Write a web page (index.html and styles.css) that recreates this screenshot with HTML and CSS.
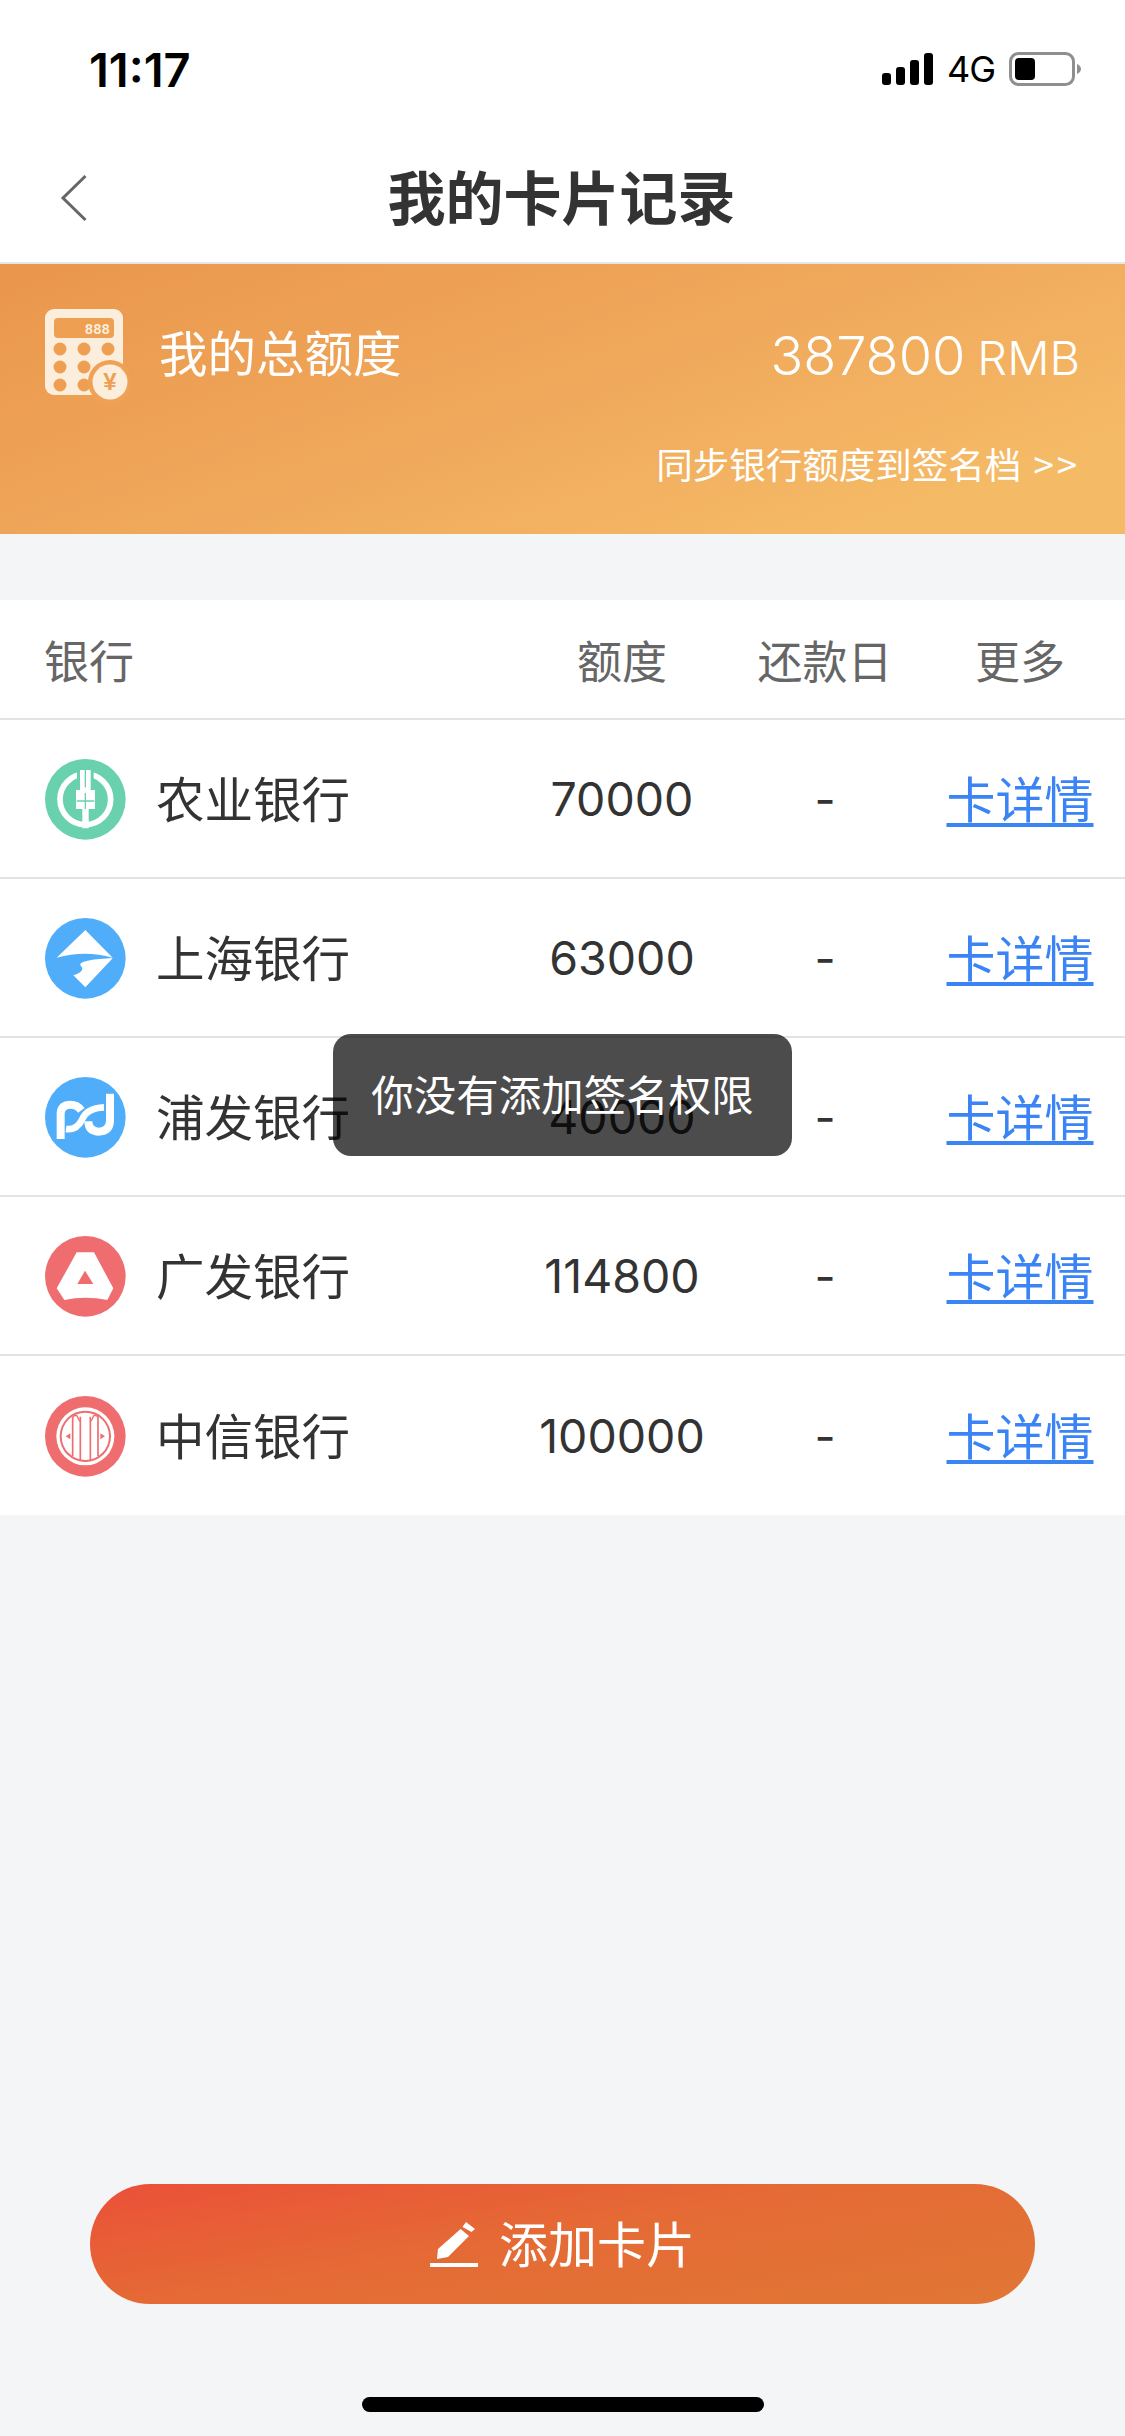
FILE: index.html
```html
<!DOCTYPE html>
<html lang="zh-CN">
<head>
<meta charset="utf-8">
<title>我的卡片记录</title>
<link rel="stylesheet" href="styles.css">
</head>
<body>
<div class="page">
  <div class="status">
    <span class="time">11:17</span>
    <div class="status-right">
      <svg class="signal" width="51" height="32" viewBox="0 0 51 32"><rect x="0" y="20" width="9" height="12" rx="3"/><rect x="14" y="14" width="9" height="18" rx="3"/><rect x="28" y="7" width="9" height="25" rx="3"/><rect x="42" y="0" width="9" height="32" rx="3"/></svg>
      <span class="net">4G</span>
      <svg class="battery" width="72" height="34" viewBox="0 0 72 34"><rect x="1.500" y="1.500" width="63" height="31" rx="8" fill="none" stroke="#8f8f8f" stroke-width="3"/><rect x="6" y="6" width="20" height="22" rx="4" fill="#000"/><path d="M68 12 Q72 14 72 17 Q72 20 68 22Z" fill="#8f8f8f"/></svg>
    </div>
  </div>
  <header class="nav">
    <svg class="back" width="28" height="48" viewBox="0 0 28 48"><path d="M25.500 2 L3 24 L25.500 46" fill="none" stroke="#666" stroke-width="3"/></svg>
    <h1 class="title">我的卡片记录</h1>
  </header>
  <section class="banner">
    <div class="banner-top">
      <svg class="calc" width="84" height="96" viewBox="0 0 84 96">
        <rect x="0" y="0" width="78" height="86" rx="9" fill="#fbeedd"/>
        <rect x="9" y="9" width="60" height="20" rx="4" fill="#ef9f52"/>
        <text x="65" y="25" text-anchor="end" class="calc-num">888</text>
        <g fill="#ef9f52"><circle cx="15" cy="40" r="6.500"/><circle cx="39" cy="40" r="6.500"/><circle cx="63" cy="40" r="6.500"/><circle cx="15" cy="58" r="6.500"/><circle cx="39" cy="58" r="6.500"/><circle cx="15" cy="76" r="6.500"/><circle cx="39" cy="76" r="6.500"/></g>
        <circle cx="65" cy="73" r="22" fill="#f0a156"/>
        <circle cx="65" cy="73" r="17.500" fill="#fbeedd"/>
        <text x="65" y="81" text-anchor="middle" class="calc-yen">¥</text>
      </svg>
      <span class="banner-label">我的总额度</span>
      <span class="banner-total"><span class="total-num">387800</span><span class="total-unit">RMB</span></span>
    </div>
    <div class="banner-sync">同步银行额度到签名档 <span class="sync-arrows">&gt;&gt;</span></div>
  </section>
  <section class="table">
    <div class="row head">
      <span class="c-name">银行</span><span class="c-mid">额度</span><span class="c-mid">还款日</span><span class="c-mid">更多</span>
    </div>
    <div class="row">
      <div class="c-bank">
        <svg class="logo" viewBox="0 0 243 243"><circle cx="121" cy="121" r="121" fill="#6ad1ae"/><circle cx="121" cy="121" r="76" fill="none" stroke="#fff" stroke-width="17"/><rect x="96" y="24" width="50" height="60" fill="#6ad1ae"/><path d="M105 33H137V93H150V150H131V208H112V150H93V93H105Z" fill="#fff"/><path d="M121 33V85M121 102V150M95 126H148" stroke="#6ad1ae" stroke-width="4" fill="none"/></svg>
        <span class="bank-name">农业银行</span>
      </div>
      <span class="c-mid num">70000</span><span class="c-mid dash">-</span><a class="c-mid link" href="#">卡详情</a>
    </div>
    <div class="row">
      <div class="c-bank">
        <svg class="logo" viewBox="0 0 243 243"><circle cx="121" cy="121" r="121" fill="#50adfa"/><path d="M121 36L35 119Q121 96 203 119Z" fill="#fff"/><path d="M203 121L121 208L85 172C105 165 120 155 107 143C98 130 150 122 203 121Z" fill="#fff"/></svg>
        <span class="bank-name">上海银行</span>
      </div>
      <span class="c-mid num">63000</span><span class="c-mid dash">-</span><a class="c-mid link" href="#">卡详情</a>
    </div>
    <div class="row">
      <div class="c-bank">
        <svg class="logo" viewBox="0 0 243 243"><circle cx="121" cy="121" r="121" fill="#50adfa"/><g transform="translate(-75 -52)" fill="none" stroke="#fff"><path d="M122 238V160Q124 135 152 135Q172 135 184 152" stroke-width="24"/><path d="M138 208Q170 212 186 180Q200 145 252 143" stroke-width="20"/><path d="M270 102V185Q268 216 235 216Q205 214 205 185" stroke-width="24"/></g></svg>
        <span class="bank-name">浦发银行</span>
      </div>
      <span class="c-mid num">40000</span><span class="c-mid dash">-</span><a class="c-mid link" href="#">卡详情</a>
    </div>
    <div class="row">
      <div class="c-bank">
        <svg class="logo" viewBox="0 0 243 243"><circle cx="121" cy="121" r="121" fill="#ef6d6f"/><path d="M95 49H147L205 157L187 192Q121 178 58 192L35 157Z" fill="#fff"/><path d="M120 104L97 144H145Z" fill="#ef6d6f"/></svg>
        <span class="bank-name">广发银行</span>
      </div>
      <span class="c-mid num">114800</span><span class="c-mid dash">-</span><a class="c-mid link" href="#">卡详情</a>
    </div>
    <div class="row last">
      <div class="c-bank">
        <svg class="logo" viewBox="0 0 243 243"><circle cx="121" cy="121" r="121" fill="#ef6d6f"/><circle cx="121" cy="121" r="87" fill="#fff"/><circle cx="121" cy="121" r="77" fill="#ef6d6f"/><circle cx="121" cy="121" r="71" fill="#fff"/><path d="M83 62V180M106 62V192M136 62V192M159 62V180" stroke="#ef6d6f" stroke-width="5" fill="none"/><path d="M96 58Q100 72 106 76M146 58Q142 72 136 76M83 62Q90 58 96 58M159 62Q152 58 146 58" stroke="#ef6d6f" stroke-width="4" fill="none"/><path d="M62 121L76 112V130ZM180 121L166 112V130Z" fill="#ef6d6f"/></svg>
        <span class="bank-name">中信银行</span>
      </div>
      <span class="c-mid num">100000</span><span class="c-mid dash">-</span><a class="c-mid link" href="#">卡详情</a>
    </div>
  </section>
  <button class="add">
    <svg class="pencil" width="48" height="45" viewBox="0 0 48 45"><path d="M7 37L8 27L30.600 7L39 14L18 35Z" fill="#fff"/><path d="M36 0L45 7L41.500 10L32.500 5Z" fill="#fff"/><rect x="0" y="41" width="48" height="4" fill="#fff"/></svg>
    <span class="add-text">添加卡片</span>
  </button>
  <div class="home"></div>
  <div class="toast">你没有添加签名权限</div>
</div>
</body>
</html>
```

FILE: styles.css
```css
* { box-sizing: border-box; margin: 0; padding: 0; }
html, body { background: #f4f5f7; }
body { font-family: "Noto Sans CJK SC", "Noto Sans", sans-serif; color: #333; }
.page { position: relative; width: 1125px; height: 2436px; display: flex; flex-direction: column; background: #f4f5f7; overflow: hidden; }

.status { height: 138px; background: #fff; display: flex; align-items: center; justify-content: space-between; padding: 0 44px 0 89px; }
.time { font-family: Inter, sans-serif; font-weight: 600; font-size: 47px; color: #000; letter-spacing: 0; }
.status-right { display: flex; align-items: center; gap: 14px; }
.net { font-family: Inter, sans-serif; font-size: 36px; color: #000; letter-spacing: -1px; }

.nav { position: relative; height: 126px; background: #fff; border-bottom: 2px solid #e6e6e6; display: flex; align-items: center; justify-content: center; padding-bottom: 10px; padding-right: 2px; }
.back { position: absolute; left: 60px; top: 36px; }
.title { font-size: 58px; line-height: 70px; font-weight: 700; color: #333; }

.banner { height: 270px; padding: 45px 45px 0 45px; background: linear-gradient(160deg, #ea964c 0%, #f0a95c 50%, #f5ba66 85%); color: #fff; display: flex; flex-direction: column; }
.banner-top { display: flex; align-items: flex-start; }
.calc { flex: none; display: block; }
.calc-num { font-family: "Liberation Mono", monospace; font-weight: 700; font-size: 14px; fill: #fbeedd; }
.calc-yen { font-family: "Liberation Sans", sans-serif; font-weight: 700; font-size: 24px; fill: #ef9f52; }
.banner-label { margin: 7px 0 0 30px; font-size: 48.500px; line-height: 70px; font-weight: 400; }
.banner-total { margin: 12px 0 0 auto; line-height: 70px; white-space: nowrap; }
.total-num { font-family: Inter, sans-serif; font-weight: 300; font-size: 54px; }
.total-unit { font-family: Inter, sans-serif; font-weight: 300; font-size: 47px; margin-left: 12px; }
.banner-sync { margin-top: 36px; text-align: right; font-size: 36.500px; line-height: 46px; font-weight: 400; word-spacing: 4px; }
.sync-arrows { letter-spacing: 3px; }

.table { margin-top: 66px; background: #fff; }
.row { display: grid; grid-template-columns: 475px 204px 202px 188px; align-items: center; height: 159px; padding-left: 45px; border-bottom: 2px solid #e3e3e3; }
.row.head { height: 120px; font-size: 45px; color: #666; font-weight: 400; }
.row.last { border-bottom: 0; height: 159px; }
.c-name { margin-left: -1px; }
.c-mid { text-align: center; }
.c-bank { display: flex; align-items: center; gap: 30px; }
.logo { width: 81px; height: 81px; flex: none; display: block; margin-top: 2px; }
.bank-name { font-size: 48.500px; font-weight: 400; color: #333; margin-bottom: 3px; }
.num { font-family: Inter, sans-serif; font-size: 46.500px; font-weight: 400; color: #333; }
.dash { font-family: Inter, sans-serif; font-size: 46px; color: #333; }
.link { font-size: 49px; font-weight: 400; color: #3b84f5; text-decoration: underline; text-underline-offset: 5px; padding-bottom: 5px; }

.add { margin: auto 90px 0; height: 120px; border: 0; border-radius: 60px; background: linear-gradient(170deg, #eb5038 0%, #e56a35 45%, #e07735 100%); color: #fff; display: flex; align-items: center; justify-content: center; gap: 21px; font: 400 49px "Noto Sans CJK SC", sans-serif; }
.add-text { padding-bottom: 5px; }
.pencil { flex: none; display: block; }
.home { flex: none; width: 402px; height: 15px; margin: 93px 0 24px 362px; border-radius: 8px; background: #000; }

.toast { position: absolute; left: 333px; top: 1034px; width: 459px; height: 122px; border-radius: 18px; background: rgba(0, 0, 0, .7); color: #fff; font-size: 42.500px; font-weight: 400; display: flex; align-items: center; justify-content: center; padding-bottom: 6px; }
```
